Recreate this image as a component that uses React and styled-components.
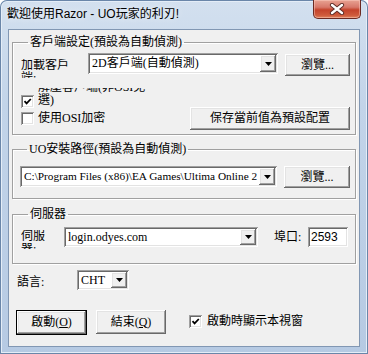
import React from 'react';
import styled, { createGlobalStyle, css } from 'styled-components';

const UI_FONT = `"Liberation Serif", "Noto Sans CJK TC", serif`;
const TITLE_FONT = `"Liberation Sans", "Noto Sans CJK TC", sans-serif`;

const GlobalStyle = createGlobalStyle`
  html, body {
    margin: 0;
    padding: 0;
    background: #fff;
  }
  body {
    width: 368px;
    height: 354px;
    overflow: hidden;
  }
  * {
    box-sizing: border-box;
  }
`;

const sunken = css`
  background: #fff;
  box-shadow:
    inset 1px 1px 0 #a0a0a0,
    inset -1px -1px 0 #ffffff,
    inset 2px 2px 0 #696969,
    inset -2px -2px 0 #e3e3e3;
`;

const raised = css`
  background: #f0f0f0;
  box-shadow:
    inset -1px -1px 0 #696969,
    inset 1px 1px 0 #ffffff,
    inset -2px -2px 0 #a0a0a0,
    inset 2px 2px 0 #e3e3e3;
`;

const Window = styled.div`
  width: 368px;
  height: 354px;
  display: flex;
  flex-direction: column;
  padding: 0 8px 7px 8px;
  border-radius: 7px 7px 0 0;
  background: linear-gradient(180deg, #d3e0ef 0%, #c2d4e9 30%, #b6cae3 100%);
  box-shadow: inset 0 0 0 1px #6a86a9, inset 0 0 0 2px #e4edf7;
`;

const TitleBar = styled.div`
  height: 29px;
  display: flex;
  align-items: flex-start;
`;

const Title = styled.div`
  margin: 7px 0 0 -1px;
  font-family: ${TITLE_FONT};
  font-size: 12px;
  line-height: 14px;
  color: #000;
  text-shadow: 0 0 6px rgba(255, 255, 255, 0.9);
`;

const CloseButton = styled.div`
  margin: 0 -1px 0 auto;
  width: 48px;
  height: 19px;
  display: flex;
  align-items: center;
  justify-content: center;
  border: 1px solid #6b2a22;
  border-top: none;
  border-radius: 0 0 5px 5px;
  background: linear-gradient(180deg, #e8a393 0%, #d7786a 40%, #c4432b 55%, #cf5b3c 85%, #e0845e 100%);
  box-shadow: inset 0 0 0 1px rgba(255, 210, 200, 0.45);
`;

const Client = styled.div`
  flex: 1;
  display: flex;
  flex-direction: column;
  background: #f0f0f0;
  border: 1px solid #8197b3;
  font-family: ${UI_FONT};
  font-size: 12px;
  color: #000;
`;

const Group = styled.fieldset`
  margin: ${(p) => p.$top}px 3px 0 3px;
  padding: ${(p) => p.$pad};
  width: 344px;
  min-inline-size: 0;
  border: 1px solid #a0a0a0;
  box-shadow: inset 1px 1px 0 #fff, 1px 1px 0 #fff;
`;

const Legend = styled.legend`
  margin-left: 7px;
  padding: 0 2px;
  line-height: 14px;
  font-size: 12px;
`;

const Row = styled.div`
  display: flex;
  align-items: flex-start;
  margin-top: ${(p) => p.$top || 0}px;
  padding-left: ${(p) => p.$left || 0}px;
`;

const Column = styled.div`
  display: flex;
  flex-direction: column;
`;

/* label squeezed into a fixed box, the way the dialog clips wrapped captions */
const ClipLabel = styled.div`
  width: ${(p) => p.$w}px;
  height: ${(p) => p.$h}px;
  margin-top: ${(p) => p.$top || 0}px;
  margin-right: ${(p) => p.$right || 0}px;
  margin-bottom: ${(p) => p.$bottom || 0}px;
  overflow: hidden;
  line-height: 13px;
  flex-shrink: 0;
`;

const ClipText = styled.span`
  display: block;
  margin-top: ${(p) => p.$shift || 0}px;
`;

const Label = styled.div`
  line-height: 13px;
  margin-top: ${(p) => p.$top || 0}px;
  margin-left: ${(p) => p.$left || 0}px;
  width: ${(p) => (p.$w ? `${p.$w}px` : 'auto')};
  flex-shrink: 0;
`;

const Combo = styled.div`
  ${sunken}
  display: flex;
  width: ${(p) => p.$w}px;
  height: ${(p) => p.$h || 21}px;
  padding: 2px;
  flex-shrink: 0;
`;

const ComboText = styled.div`
  flex: 1;
  overflow: hidden;
  white-space: nowrap;
  padding-left: 2px;
  line-height: ${(p) => p.$lh || 17}px;
  font-size: ${(p) => p.$size || 12}px;
`;

const DropButton = styled.div`
  ${raised}
  width: 16px;
  display: flex;
  align-items: center;
  justify-content: center;
`;

const TextInput = styled.div`
  ${sunken}
  width: ${(p) => p.$w}px;
  height: 20px;
  padding: 2px 3px;
  line-height: 16px;
  font-family: "Liberation Sans", sans-serif;
  font-size: 12px;
`;

const Button = styled.div`
  ${raised}
  width: ${(p) => p.$w}px;
  height: ${(p) => p.$h || 22}px;
  margin-top: ${(p) => p.$top || 0}px;
  margin-left: ${(p) => (p.$auto ? 'auto' : `${p.$left || 0}px`)};
  display: flex;
  align-items: center;
  justify-content: center;
  line-height: 13px;
  flex-shrink: 0;
  ${(p) => p.$default && css`
    border: 1px solid #000;
  `}
`;

const CheckItem = styled.div`
  display: flex;
  align-items: flex-start;
  margin-top: ${(p) => p.$top || 0}px;
  margin-left: ${(p) => p.$left || 0}px;
`;

const Box = styled.div`
  ${sunken}
  width: 13px;
  height: 13px;
  margin-top: ${(p) => p.$top || 0}px;
  margin-right: ${(p) => p.$gap || 4}px;
  display: flex;
  align-items: center;
  justify-content: center;
  flex-shrink: 0;
`;

const Arrow = () => (
  <svg width="7" height="4" viewBox="0 0 7 4">
    <polygon points="0,0 7,0 3.5,4" fill="#000" />
  </svg>
);

const Tick = () => (
  <svg width="9" height="9" viewBox="0 0 9 9">
    <path d="M1.5 4.2 L3.6 6.4 L7.8 2" fill="none" stroke="#000" strokeWidth="1.8" />
  </svg>
);

const CheckBox = ({ checked, top, gap }) => (
  <Box $top={top} $gap={gap}>{checked && <Tick />}</Box>
);

const DropDown = ({ w, h, text, lh, size }) => (
  <Combo $w={w} $h={h}>
    <ComboText $lh={lh} $size={size}>{text}</ComboText>
    <DropButton><Arrow /></DropButton>
  </Combo>
);

const App = () => (
  <>
    <GlobalStyle />
    <Window>
      <TitleBar>
        <Title>歡迎使用Razor - UO玩家的利刃!</Title>
        <CloseButton>
          <svg width="16" height="12" viewBox="0 0 16 12">
            <path d="M3 2 L13 10 M13 2 L3 10" stroke="#5a2a24" strokeWidth="4.2" strokeLinecap="round" />
            <path d="M3 2 L13 10 M13 2 L3 10" stroke="#fff" strokeWidth="2.4" strokeLinecap="round" />
          </svg>
        </CloseButton>
      </TitleBar>
      <Client>
        <Group $top={5} $pad="4px 5px 4px 8px">
          <Legend>客戶端設定(預設為自動偵測)</Legend>
          <Row>
            <ClipLabel $w={52} $h={19} $top={6} $right={15} $bottom={-2}>
              <ClipText>加載客戶端:</ClipText>
            </ClipLabel>
            <DropDown w={190} text="2D客戶端(自動偵測)" />
            <Button $w={65} $top={1} $left={7}>瀏覽...</Button>
          </Row>
          <Row $top={12}>
            <Column>
              <CheckItem>
                <CheckBox checked top={7} gap={4} />
                <ClipLabel $w={114} $h={23}>
                  <ClipText $shift={-7}>解壓客戶端(非OSI免選)</ClipText>
                </ClipLabel>
              </CheckItem>
              <CheckItem $top={1}>
                <CheckBox gap={4} />
                <Label>使用OSI加密</Label>
              </CheckItem>
            </Column>
            <Button $w={160} $h={23} $top={19} $auto>保存當前值為預設配置</Button>
          </Row>
        </Group>

        <Group $top={7} $pad="10px 5px 10px 7px">
          <Legend>UO安裝路徑(預設為自動偵測)</Legend>
          <Row>
            <DropDown w={257} size={11.3} text="C:\Program Files (x86)\EA Games\Ultima Online 2" />
            <Button $w={66} $left={7}>瀏覽...</Button>
          </Row>
        </Group>

        <Group $top={8} $pad="6px 5px 16px 8px">
          <Legend>伺服器</Legend>
          <Row>
            <ClipLabel $w={30} $h={19} $top={3} $right={13} $bottom={-2}>
              <ClipText>伺服器:</ClipText>
            </ClipLabel>
            <DropDown w={194} h={20} lh={16} text="login.odyes.com" />
            <Label $top={4} $w={34} $left={16}>埠口:</Label>
            <TextInput $w={40}>2593</TextInput>
          </Row>
        </Group>

        <Row $top={6} $left={8}>
          <Label $top={6} $w={60}>語言:</Label>
          <DropDown w={52} h={20} lh={16} text="CHT" />
        </Row>

        <Row $top={20} $left={7}>
          <Button $w={71} $h={25} $default>啟動(<u>O</u>)</Button>
          <Button $w={70} $h={24} $left={9}>結束(<u>Q</u>)</Button>
          <CheckItem $top={5} $left={23}>
            <CheckBox checked gap={5} />
            <Label>啟動時顯示本視窗</Label>
          </CheckItem>
        </Row>
      </Client>
    </Window>
  </>
);

export default App;
